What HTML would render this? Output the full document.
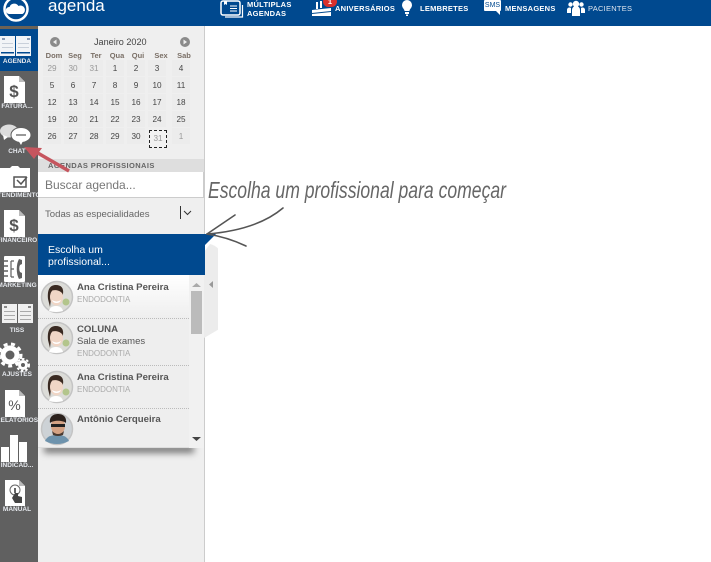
<!DOCTYPE html>
<html lang="pt"><head><meta charset="utf-8"><title>agenda</title>
<style>
*{box-sizing:border-box}
html,body{margin:0;padding:0;width:711px;height:562px;overflow:hidden;background:#fff;font-family:"Liberation Sans",sans-serif}
.a{position:absolute}
.t{position:absolute;white-space:nowrap}
.top{color:#fff;font-weight:bold;font-size:7.5px;line-height:8.5px;letter-spacing:.25px}
.side{position:absolute;left:-13px;width:60px;text-align:center;color:#e6e9ee;font-size:6.5px;font-weight:bold;white-space:nowrap}
.d{position:absolute;width:18px;height:16px;line-height:18px;text-align:center;font-size:8.2px;color:#444;background:#ececec}
.h{position:absolute;width:22px;text-align:center;font-size:7.5px;font-weight:bold;color:#7a6f66}
.n{position:absolute;left:77px;font-size:9.6px;font-weight:bold;color:#555;white-space:nowrap}
.e{position:absolute;left:77px;font-size:8px;color:#aaa;white-space:nowrap}
</style></head><body>
<div class="a" style="left:0;top:0;width:711px;height:26px;background:#00498f"></div>
<svg class="a" style="left:0;top:0" width="36" height="26"><circle cx="16" cy="9" r="11.5" fill="none" stroke="#fff" stroke-width="2.5"/><path d="M9 14a3.5 3.5 0 0 1 .5-7 5 5 0 0 1 9-1 4 4 0 0 1 4 8z" fill="#fff"/></svg>
<div class="t" style="left:48px;top:-4px;font-size:17px;color:#fff">agenda</div>

<svg class="a" style="left:220px;top:0" width="24" height="20" fill="none" stroke="#fff"><rect x="1" y="1" width="19" height="14" rx="2" stroke-width="1.5"/><path d="M22.5 5v12H5" stroke-width="1.2"/><path d="M10 6h7M10 8.5h7M10 11h7" stroke-width="1"/><path d="M4 1v4l1.5-1L7 5V1" fill="#fff" stroke="none"/></svg>
<div class="t top" style="left:247px;top:1px">MÚLTIPLAS<br>AGENDAS</div>
<svg class="a" style="left:311px;top:0" width="24" height="18"><path d="M1 10l19-2v3L1 13zM1 14l19-2v4H1z" fill="#fff"/><path d="M5 2h2v7H5zM9 1h2v7H9z" fill="#fff"/></svg>
<div class="a" style="left:323px;top:-4px;width:14px;height:11px;border-radius:6px;background:#d9302c;color:#fff;font-size:7.5px;font-weight:bold;text-align:center;line-height:12px">1</div>
<div class="t top" style="left:335px;top:5px">ANIVERSÁRIOS</div>
<svg class="a" style="left:400px;top:0" width="14" height="17" fill="#fff"><path d="M2 5a5 5 0 0 1 10 0c0 3-2.5 4-2.5 6h-5C4.500 9 2 8 2 5zM5 12h4v2H5zM6 14.500h2V16H6z"/></svg>
<div class="t top" style="left:420px;top:5px">LEMBRETES</div>
<div class="a" style="left:484px;top:0;width:17px;height:11px;background:#fff;border-radius:1px;color:#00498f;font-size:7px;line-height:11px;text-align:center">SMS</div>
<svg class="a" style="left:494px;top:10px" width="8" height="6"><path d="M1 0h5v5z" fill="#fff"/></svg>
<div class="t top" style="left:505px;top:5px">MENSAGENS</div>
<svg class="a" style="left:567px;top:0" width="18" height="17" fill="#fff"><circle cx="9" cy="4" r="3.200"/><circle cx="3.500" cy="4.500" r="2.200"/><circle cx="14.500" cy="4.500" r="2.200"/><path d="M5 16V10a4 4 0 0 1 8 0v6zM0 13V9.500A2.500 2.500 0 0 1 4 8v5zM18 13V9.500A2.500 2.500 0 0 0 14 8v5z"/></svg>
<div class="t top" style="left:588px;top:5px;font-weight:normal;color:#dfe6ef">PACIENTES</div>

<div class="a" style="left:0;top:26px;width:38px;height:536px;background:#606060"></div>
<div class="a" style="left:0;top:26px;width:38px;height:3px;background:#6b6256"></div>
<div class="a" style="left:0;top:29px;width:38px;height:42px;background:#00498f"></div>
<svg class="a" style="left:0;top:35px" width="32" height="21"><path d="M0 1h15v20H0zM16 1h15v20H16z" fill="#f2f4f7"/><path d="M2 3h3v2H2zM27 3h3v2h-3z" fill="#8a9bb5"/><path d="M2 8h11v1H2zM18 8h11v1H18zM2 12h11v1H2zM18 12h11v1H18z" fill="#c9d0da"/><path d="M1 17h13v1.500H1zM17 17h13v1.500H17z" fill="#00498f"/></svg>
<div class="side" style="top:58px">AGENDA</div>
<svg class="a" style="left:4px;top:76px" width="21" height="27"><path d="M0 0h15l6 6v21H0z" fill="#fff"/><path d="M15 0v6h6z" fill="#bbb"/><text x="10" y="21" text-anchor="middle" font-family="Liberation Sans" font-weight="bold" font-size="17" fill="#555">$</text></svg>
<div class="side" style="top:103px">FATURA...</div>
<svg class="a" style="left:0;top:124px" width="32" height="23"><ellipse cx="9" cy="7" rx="9" ry="6.500" fill="#ddd"/><ellipse cx="21" cy="11" rx="10" ry="7.500" fill="#fff" stroke="#606060"/><path d="M16 10h10v2H16z" fill="#999"/><path d="M3 11l1 5 4-3zM18 16l3 5 2-4z" fill="#fff"/></svg>
<div class="side" style="top:148px">CHAT</div>
<svg class="a" style="left:0;top:165px" width="32" height="27"><path d="M0 3h10l2-2h6l2 2h10v24H0z" fill="#fff"/><path d="M14 12h12v10H14z" fill="#fff" stroke="#555" stroke-width="1.500"/><path d="M17 15l4 4 6-7" fill="none" stroke="#555" stroke-width="1.500"/></svg>
<div class="side" style="top:192px">ATENDIMENTO</div>
<svg class="a" style="left:4px;top:210px" width="21" height="27"><path d="M0 0h15l6 6v21H0z" fill="#fff"/><path d="M15 0v6h6z" fill="#bbb"/><text x="10" y="21" text-anchor="middle" font-family="Liberation Sans" font-weight="bold" font-size="17" fill="#555">$</text></svg>
<div class="side" style="top:237px">FINANCEIRO</div>
<svg class="a" style="left:4px;top:256px" width="21" height="26"><rect width="21" height="26" rx="1" fill="#fff"/><path d="M0 5h4M0 10h4M0 15h4M0 20h4" stroke="#606060" stroke-width="1.500"/><path d="M7 5h3M7 13h3M7 21h3M7 5v16" stroke="#606060" stroke-width="1.200" fill="none"/><path d="M15 3c-3 5-3 15 0 20l3-1v-5l-2-1c-1-2-1-5 0-7l2-1V4z" fill="#606060"/></svg>
<div class="side" style="top:282px">MARKETING</div>
<svg class="a" style="left:2px;top:304px" width="32" height="20"><path d="M0 0h15v19H0zM16 0h15v19H16z" fill="#f0f0f0"/><path d="M2 2h3v2H2zM26 2h3v2h-3z" fill="#888"/><path d="M2 7h11v1H2zM18 7h11v1H18zM2 11h11v1H2zM18 11h11v1H18zM2 15h11v1H2zM18 15h11v1H18z" fill="#aaa"/></svg>
<div class="side" style="top:327px">TISS</div>
<svg class="a" style="left:0;top:342px" width="30" height="31" fill="#fff"><circle cx="10" cy="13" r="7" fill="none" stroke="#fff" stroke-width="5"/><circle cx="10" cy="13" r="11" fill="none" stroke="#fff" stroke-width="3" stroke-dasharray="4 3.500"/><circle cx="23" cy="23" r="3.500" fill="none" stroke="#fff" stroke-width="3"/><circle cx="23" cy="23" r="6" fill="none" stroke="#fff" stroke-width="2" stroke-dasharray="2.500 2"/></svg>
<div class="side" style="top:371px">AJUSTES</div>
<svg class="a" style="left:5px;top:390px" width="20" height="27"><path d="M0 0h14l6 6v21H0z" fill="#fff"/><path d="M14 0v6h6z" fill="#bbb"/><text x="9.500" y="20" text-anchor="middle" font-family="Liberation Sans" font-size="14" fill="#555">%</text></svg>
<div class="side" style="top:417px">RELATÓRIOS</div>
<svg class="a" style="left:1px;top:435px" width="27" height="27" fill="#fff"><path d="M0 12h8v15H0zM9 0h8v27H9zM18 7h8v20h-8z"/></svg>
<div class="side" style="top:462px">INDICAD...</div>
<svg class="a" style="left:5px;top:480px" width="20" height="26"><path d="M0 0h14l6 6v20H0z" fill="#fff"/><path d="M14 0v6h6z" fill="#bbb"/><circle cx="10" cy="10" r="5" fill="none" stroke="#666"/><path d="M9 8h2v5H9z" fill="#666"/><path d="M10 13h3v3l4 1v6h-7l-3-5z" fill="#444"/></svg>
<div class="side" style="top:506px">MANUAL</div>

<div class="a" style="left:38px;top:26px;width:167px;height:536px;background:#efefef;border-right:1px solid #ccc"></div>
<svg class="a" style="left:50px;top:37px" width="10" height="10"><circle cx="5" cy="5" r="5" fill="#8a8a8a"/><path d="M6.500 2.500v5L3 5z" fill="#eee"/></svg>
<svg class="a" style="left:180px;top:37px" width="10" height="10"><circle cx="5" cy="5" r="5" fill="#8a8a8a"/><path d="M3.500 2.500v5L7 5z" fill="#eee"/></svg>
<div class="t" style="left:94px;top:37px;font-size:9.1px;color:#444">Janeiro 2020</div>
<div class="h" style="left:43px;top:51px">Dom</div><div class="h" style="left:64px;top:51px">Seg</div><div class="h" style="left:85px;top:51px">Ter</div><div class="h" style="left:106px;top:51px">Qua</div><div class="h" style="left:127px;top:51px">Qui</div><div class="h" style="left:150px;top:51px">Sex</div><div class="h" style="left:173px;top:51px">Sab</div>

<div class="d" style="left:43px;top:60px;color:#999">29</div><div class="d" style="left:64px;top:60px;color:#999">30</div><div class="d" style="left:85px;top:60px;color:#999">31</div><div class="d" style="left:106px;top:60px">1</div><div class="d" style="left:127px;top:60px">2</div><div class="d" style="left:148px;top:60px">3</div><div class="d" style="left:172px;top:60px">4</div>
<div class="d" style="left:43px;top:77px">5</div><div class="d" style="left:64px;top:77px">6</div><div class="d" style="left:85px;top:77px">7</div><div class="d" style="left:106px;top:77px">8</div><div class="d" style="left:127px;top:77px">9</div><div class="d" style="left:148px;top:77px">10</div><div class="d" style="left:172px;top:77px">11</div>
<div class="d" style="left:43px;top:94px">12</div><div class="d" style="left:64px;top:94px">13</div><div class="d" style="left:85px;top:94px">14</div><div class="d" style="left:106px;top:94px">15</div><div class="d" style="left:127px;top:94px">16</div><div class="d" style="left:148px;top:94px">17</div><div class="d" style="left:172px;top:94px">18</div>
<div class="d" style="left:43px;top:111px">19</div><div class="d" style="left:64px;top:111px">20</div><div class="d" style="left:85px;top:111px">21</div><div class="d" style="left:106px;top:111px">22</div><div class="d" style="left:127px;top:111px">23</div><div class="d" style="left:148px;top:111px">24</div><div class="d" style="left:172px;top:111px">25</div>
<div class="d" style="left:43px;top:128px">26</div><div class="d" style="left:64px;top:128px">27</div><div class="d" style="left:85px;top:128px">28</div><div class="d" style="left:106px;top:128px">29</div><div class="d" style="left:127px;top:128px">30</div><div class="d" style="left:149px;top:130px;height:18px;border:1px dashed #222;background:#f2f2f2;color:#999;line-height:16px">31</div><div class="d" style="left:172px;top:128px;color:#999">1</div>

<div class="a" style="left:38px;top:159px;width:166px;height:13px;background:#dedede"></div>
<div class="t" style="left:48px;top:161px;font-size:7.500px;font-weight:bold;color:#666;letter-spacing:.4px">AGENDAS PROFISSIONAIS</div>
<div class="a" style="left:38px;top:172px;width:166px;height:26px;background:#fff;border-bottom:1px solid #ccc;border-right:1px solid #ccc"></div>
<div class="t" style="left:45px;top:178px;font-size:12px;color:#777">Buscar agenda...</div>
<div class="t" style="left:45px;top:209px;font-size:9.6px;color:#666">Todas as especialidades</div>
<div class="a" style="left:180px;top:206px;width:1px;height:13px;background:#333"></div>
<svg class="a" style="left:183px;top:210px" width="9" height="6"><path d="M1 1l3.500 3.500L8 1" fill="none" stroke="#333"/></svg>

<svg class="a" style="left:204px;top:240px" width="14" height="100"><path d="M0 12L6 4q8 2 11 9v75L0 98z" fill="#ececec"/><path d="M9 41l-4 3.500L9 48z" fill="#999"/></svg>
<div class="a" style="left:44px;top:440px;width:150px;height:8px;box-shadow:0 5px 7px rgba(0,0,0,.5)"></div>
<div class="a" style="left:38px;top:275px;width:166px;height:173px;background:#eee;border-bottom:1px solid #ddd"></div>
<div class="a" style="left:38px;top:275px;width:151px;height:44px;background:linear-gradient(#fff,#eee)"></div>
<div class="a" style="left:189px;top:275px;width:15px;height:173px;background:#f1f1f1"></div>
<div class="a" style="left:191px;top:291px;width:11px;height:43px;background:#bbb"></div>
<svg class="a" style="left:192px;top:282px" width="9" height="6"><path d="M0 5l4.500-4L9 5z" fill="#aaa"/></svg>
<svg class="a" style="left:192px;top:437px" width="9" height="5"><path d="M0 0h9L4.500 4z" fill="#444"/></svg>
<div class="a" style="left:38px;top:318px;width:151px;border-top:1px dotted #bbb"></div>
<div class="a" style="left:38px;top:365px;width:151px;border-top:1px dotted #bbb"></div>
<div class="a" style="left:38px;top:408px;width:151px;border-top:1px dotted #bbb"></div>
<svg class="a" style="left:40px;top:280px;filter:blur(.35px)" width="36" height="170">
<defs>
<g id="w"><circle cx="17" cy="17" r="15.500" fill="#dcdcd8" stroke="#c4c4c4" stroke-width="1.500"/><path d="M8 19C7 8 11 5 16 5s8 3 7 9c-3-3-8-4-11-3-1 2-1 5-1 8l-1 8z" fill="#3a2a22"/><ellipse cx="16.500" cy="17" rx="6.500" ry="8.500" fill="#f0d6c6"/><path d="M10 11c3-1 8-2 12 2l1 2c0-6-4-9-9-8z" fill="#3a2a22"/><path d="M12 20q4.500 3 9 0-1 3-4.500 3T12 20z" fill="#fff"/><path d="M9 31c1-4 4-5 7-5s6 1 7 5q-7 2-14 0z" fill="#fff"/><circle cx="26" cy="22" r="3.500" fill="#b3c58b"/></g>
</defs>
<use href="#w" y="0"/><use href="#w" y="41"/><use href="#w" y="90"/>
<circle cx="17" cy="149" r="15.500" fill="#cdd2d6" stroke="#c4c4c4" stroke-width="1.500"/><path d="M5 161c2-5 7-6 12-6s10 1 12 6q-12 6-24 0z" fill="#6e93ad"/><ellipse cx="18" cy="146" rx="7" ry="8.500" fill="#d4a284"/><path d="M10 143c-1-7 4-9 8-9s9 2 8 9c-3-3-13-3-16 0z" fill="#2b211c"/><path d="M11 144h14v3h-14z" fill="#222"/><path d="M12 151q6 6 12 0l-1 4q-5 2-10 0z" fill="#4a3a30"/>
</svg>
<div class="n" style="top:282px">Ana Cristina Pereira</div>
<div class="e" style="top:295px">ENDODONTIA</div>
<div class="n" style="top:324px">COLUNA</div>
<div class="t" style="left:77px;top:336px;font-size:9.500px;color:#555">Sala de exames</div>
<div class="e" style="top:349px">ENDODONTIA</div>
<div class="n" style="top:372px">Ana Cristina Pereira</div>
<div class="e" style="top:385px">ENDODONTIA</div>
<div class="n" style="top:414px">Antônio Cerqueira</div>

<svg class="a" style="left:38px;top:234px" width="180" height="42"><path d="M0 0h178l-11 11v30H0z" fill="#00498f"/></svg>
<div class="t" style="left:48px;top:244px;font-size:10.500px;line-height:12px;color:#fff">Escolha um<br>profissional...</div>

<svg class="a" style="left:0;top:0;overflow:visible" width="711" height="562">
<path d="M69 171L36 152" stroke="#c6555e" stroke-width="3.500" fill="none"/><path d="M24 147l18 1-8 11z" fill="#c6555e"/>
<g fill="none" stroke="#555" stroke-width="1.600" stroke-linecap="round"><path d="M207 234q50-4 76-26"/><path d="M207 234l28-19"/><path d="M207 234q20 3 39 12"/></g>
<text x="208" y="198" font-family="Liberation Sans" font-style="italic" font-size="23" fill="#666" textLength="298" lengthAdjust="spacingAndGlyphs">Escolha um profissional para começar</text>
</svg>
</body></html>
